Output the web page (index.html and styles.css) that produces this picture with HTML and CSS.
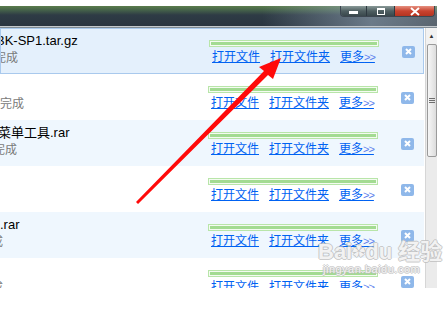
FILE: index.html
```html
<!DOCTYPE html>
<html lang="zh-CN">
<head>
  <meta charset="UTF-8" />
  <title>下载列表</title>
  <link rel="stylesheet" href="styles.css">
</head>
<body>

<div class="screen">
  <div class="titlebar">
    <div class="caption">
      <span class="cap cap-min"><i></i></span>
      <span class="cap cap-max"><i></i></span>
      <span class="cap cap-close">
        <svg width="12" height="9" viewBox="0 0 12 9"><path d="M2 1 L10 8 M10 1 L2 8" stroke="#fff" stroke-width="2"/></svg>
      </span>
    </div>
  </div>
  <div class="rule"></div>

  <div class="pane">
    <ul class="list">
      <li class="task selected">
        <div class="info">
          <div class="name cut-5">BK-SP1.tar.gz</div>
          <div class="status cut-7">完成</div>
        </div>
        <div class="actions">
          <div class="bar"><span></span></div>
          <div class="links"><a href="#">打开文件</a><a href="#">打开文件夹</a><a href="#">更多<small>&gt;&gt;</small></a></div>
        </div>
        <span class="remove"><svg width="13" height="12" viewBox="0 0 13 12"><path d="M4 3 L9 8 M9 3 L4 8" stroke="#fff" stroke-width="2"/></svg></span>
      </li>
      <li class="task">
        <div class="info">
          <div class="name">&nbsp;</div>
          <div class="status">完成</div>
        </div>
        <div class="actions">
          <div class="bar"><span></span></div>
          <div class="links"><a href="#">打开文件</a><a href="#">打开文件夹</a><a href="#">更多<small>&gt;&gt;</small></a></div>
        </div>
        <span class="remove"><svg width="13" height="12" viewBox="0 0 13 12"><path d="M4 3 L9 8 M9 3 L4 8" stroke="#fff" stroke-width="2"/></svg></span>
      </li>
      <li class="task alt">
        <div class="info">
          <div class="name cut-2">菜单工具.rar</div>
          <div class="status cut-7">完成</div>
        </div>
        <div class="actions">
          <div class="bar"><span></span></div>
          <div class="links"><a href="#">打开文件</a><a href="#">打开文件夹</a><a href="#">更多<small>&gt;&gt;</small></a></div>
        </div>
        <span class="remove"><svg width="13" height="12" viewBox="0 0 13 12"><path d="M4 3 L9 8 M9 3 L4 8" stroke="#fff" stroke-width="2"/></svg></span>
      </li>
      <li class="task">
        <div class="info">
          <div class="name">&nbsp;</div>
          <div class="status">&nbsp;</div>
        </div>
        <div class="actions">
          <div class="bar"><span></span></div>
          <div class="links"><a href="#">打开文件</a><a href="#">打开文件夹</a><a href="#">更多<small>&gt;&gt;</small></a></div>
        </div>
        <span class="remove"><svg width="13" height="12" viewBox="0 0 13 12"><path d="M4 3 L9 8 M9 3 L4 8" stroke="#fff" stroke-width="2"/></svg></span>
      </li>
      <li class="task alt">
        <div class="info">
          <div class="name">.rar</div>
          <div class="status cut-21">完成</div>
        </div>
        <div class="actions">
          <div class="bar"><span></span></div>
          <div class="links"><a href="#">打开文件</a><a href="#">打开文件夹</a><a href="#">更多<small>&gt;&gt;</small></a></div>
        </div>
        <span class="remove"><svg width="13" height="12" viewBox="0 0 13 12"><path d="M4 3 L9 8 M9 3 L4 8" stroke="#fff" stroke-width="2"/></svg></span>
      </li>
      <li class="task">
        <div class="info">
          <div class="name">&nbsp;</div>
          <div class="status cut-21">完成</div>
        </div>
        <div class="actions">
          <div class="bar"><span></span></div>
          <div class="links"><a href="#">打开文件</a><a href="#">打开文件夹</a><a href="#">更多<small>&gt;&gt;</small></a></div>
        </div>
        <span class="remove"><svg width="13" height="12" viewBox="0 0 13 12"><path d="M4 3 L9 8 M9 3 L4 8" stroke="#fff" stroke-width="2"/></svg></span>
      </li>
    </ul>

    <div class="scrollbar">
      <div class="arrow">&#9650;</div>
      <div class="thumb"><i></i><i></i><i></i></div>
    </div>
  </div>
</div>

<!-- annotation drawn over the screenshot -->
<svg class="pointer" width="447" height="331" viewBox="0 0 447 331">
  <polygon points="136,202 264,71 259,67 281,58 273,79 268,75 138,204" fill="#ff0a0a"/>
</svg>

<div class="watermark">
  <div class="wm-logo">Bai<span class="paw">&#10047;</span>du 经验</div>
  <div class="wm-url">jingyan.baidu.com</div>
</div>

</body>
</html>
```

FILE: styles.css
```css
* {
  box-sizing: border-box;
}

html, body {
  margin: 0;
  padding: 0;
  background: #ffffff;
}

body {
  width: 447px;
  height: 331px;
  overflow: hidden;
  position: relative;
  font-family: "Liberation Sans", "Noto Sans CJK SC", sans-serif;
}

.screen {
  padding-top: 6px;
  width: 437px;
}

/* window caption */
.titlebar {
  height: 20px;
  display: flex;
  justify-content: flex-end;
  background:
    linear-gradient(to right, rgba(160,178,196,0) 60%, rgba(160,178,196,0.55) 85%, rgba(200,210,220,0.3) 100%),
    linear-gradient(#5b7d4c 0, #45624a 4px, #2e3b45 9px, #2a3540 100%);
}

.caption {
  display: flex;
  height: 11px;
  margin-right: 2px;
  border: 1px solid #3c4650;
  border-top: none;
  border-radius: 0 0 4px 4px;
  overflow: hidden;
}

.cap {
  display: flex;
  align-items: center;
  justify-content: center;
  height: 100%;
  background: linear-gradient(#8a9a98, #4f5f62 50%, #39474c);
  border-right: 1px solid #2d3840;
}

.cap-min { width: 26px; }
.cap-max { width: 28px; }

.cap-min i {
  width: 9px;
  height: 3px;
  background: #ffffff;
  margin-top: 2px;
}

.cap-max i {
  width: 8px;
  height: 7px;
  border: 1px solid #ffffff;
  border-top-width: 2px;
}

.cap-close {
  width: 39px;
  border-right: none;
  background: linear-gradient(#e59080, #c9432f 50%, #b53420);
}

.rule {
  height: 2px;
  border-top: 1px solid #c4c9cd;
  border-bottom: 1px solid #7f8a92;
}

/* download list */
.pane {
  display: flex;
  height: 260px;
}

.list {
  list-style: none;
  margin: 0;
  padding: 0;
  width: 424px;
  overflow: hidden;
}

.task {
  display: flex;
  height: 46px;
  background: #ffffff;
}

.task.alt {
  background: #eff7fe;
}

.task.selected {
  background: #e4f0fc;
  border: 1px solid #a9c9ed;
}

.info {
  width: 208px;
  overflow: hidden;
  white-space: nowrap;
  padding-top: 5px;
}

.name {
  font-size: 13px;
  line-height: 16px;
  color: #000000;
}

.status {
  font-size: 12px;
  line-height: 16px;
  color: #7a7a7a;
  font-family: "Noto Sans CJK SC", sans-serif;
}

.cut-2 { margin-left: -2px; }
.cut-5 { margin-left: -5px; }
.cut-7 { margin-left: -7px; }
.cut-21 { margin-left: -21px; }

.actions {
  width: 170px;
  padding-top: 12px;
}

.selected .actions { padding-top: 11px; }
.selected .info { padding-top: 4px; }
.selected .remove { margin-top: 17px; }

.bar {
  height: 7px;
  border: 1px solid #b8e5a9;
  padding: 1px;
  background: #f4fbf1;
}

.bar span {
  display: block;
  height: 100%;
  background: #a3db92;
}

.links {
  display: flex;
  gap: 10px;
  padding-left: 3px;
  margin-top: 1px;
  font-family: "Noto Sans CJK SC", sans-serif;
  font-size: 12px;
  line-height: 15px;
}

.links a {
  color: #0062f2;
  text-decoration: underline;
  text-underline-offset: 1px;
}

.links small {
  font-family: "Liberation Sans", sans-serif;
  font-size: 11px;
  color: #5c80ec;
  letter-spacing: -1px;
}

.remove {
  width: 13px;
  height: 12px;
  margin-top: 18px;
  margin-left: 23px;
  background: #8fb8ea;
  border-radius: 2px;
  display: flex;
}

/* vertical scrollbar */
.scrollbar {
  width: 12px;
  margin-left: 1px;
  background: #ebebeb;
  border-left: 1px solid #d6d6d6;
}

.arrow {
  height: 16px;
  font-size: 6px;
  line-height: 16px;
  text-align: center;
  color: #333333;
  background: #f2f2f2;
}

.thumb {
  height: 113px;
  margin-left: 1px;
  border: 1px solid #9a9a9a;
  border-radius: 2px;
  background: linear-gradient(to right, #f6f6f6, #dcdcdc);
  display: flex;
  flex-direction: column;
  justify-content: center;
  align-items: center;
  gap: 1px;
}

.thumb i {
  width: 6px;
  height: 1px;
  background: #6d6d6d;
}

/* overlays */
.pointer {
  position: absolute;
  left: 0;
  top: 0;
}

.watermark {
  position: absolute;
  left: 318px;
  top: 240px;
  color: rgba(250, 250, 250, 0.9);
  text-shadow:
    -1px 0 rgba(190, 190, 190, 0.8),
    1px 0 rgba(190, 190, 190, 0.8),
    0 -1px rgba(190, 190, 190, 0.8),
    0 1px rgba(190, 190, 190, 0.8);
}

.wm-logo {
  font-family: "Liberation Sans", "Noto Sans CJK SC", sans-serif;
  font-size: 22px;
  font-weight: bold;
  line-height: 23px;
  white-space: nowrap;
}

.paw {
  font-size: 13px;
  vertical-align: top;
}

.wm-url {
  font-size: 11px;
  line-height: 12px;
  padding-left: 5px;
  letter-spacing: 0.5px;
}
```
